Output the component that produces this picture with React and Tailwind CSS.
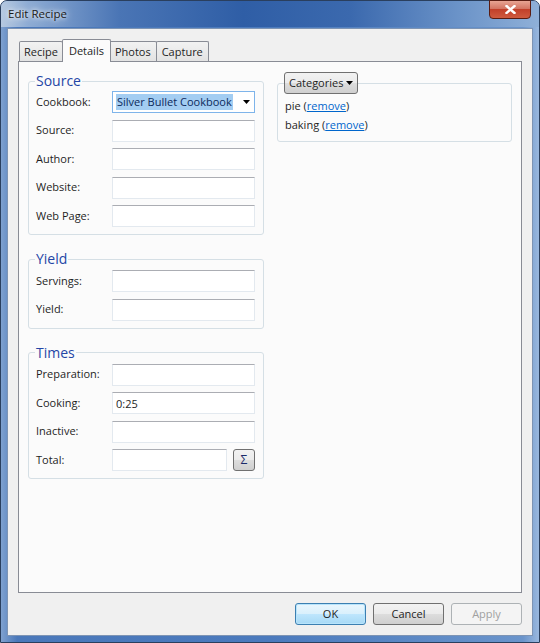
import React, { useState } from 'react';

const FONT = { fontFamily: '"Open Sans", "Noto Sans", "Liberation Sans", sans-serif' };

// one labelled row in a group box
const Field = ({ label, value, children }) => (
  <div className="flex items-center h-[22px]">
    <span className="w-[76px] shrink-0 text-[#1e1e1e]">{label}</span>
    {children || (
      <input
        defaultValue={value}
        className="w-[143px] h-[22px] px-[3px] bg-white border border-[#e3e9ef] border-t-[#abadb3] outline-none text-[#1e1e1e]"
      />
    )}
  </div>
);

const Group = ({ title, className, children }) => (
  <fieldset className={'border border-[#d5dfe5] rounded-[3px] px-[7px] pb-[7px] ' + (className || '')}>
    <legend className="ml-[-1px] px-[1px] text-[14px] leading-[18px] text-[#2446a6]">{title}</legend>
    {children}
  </fieldset>
);

const Tab = ({ label, active, onClick }) =>
  active ? (
    <div className="relative z-10 -mb-px h-[23px] px-[6px] pt-[3px] border border-b-0 border-[#898c95] bg-[#fbfbfb] -ml-px -mr-px rounded-t-[2px]">
      {label}
    </div>
  ) : (
    <button
      onClick={onClick}
      className="mt-[3px] h-[20px] px-[5px] border border-b-0 border-[#898c95] bg-[linear-gradient(#f2f2f2,#e3e3e3)] rounded-t-[2px] leading-[18px] first:ml-0 first:px-[4px] -ml-px"
    >
      {label}
    </button>
  );

const GRAD = 'bg-[linear-gradient(#f2f2f2_0%,#ebebeb_50%,#dddddd_51%,#cfcfcf_100%)]';

const Btn = ({ label, variant }) => {
  const styles = {
    ok: 'border-[#3c7fb1] bg-[linear-gradient(#eaf6fd_0%,#d9f0fc_50%,#bee6fd_51%,#a7d9f5_100%)] text-[#1e1e1e] shadow-[inset_0_0_0_1px_#b8e4fb]',
    normal: 'border-[#707070] ' + GRAD + ' text-[#1e1e1e]',
    disabled: 'border-[#adb2b5] bg-[#f4f4f4] text-[#a0a0a0]',
  };
  return (
    <button className={'w-[71px] h-[22px] border rounded-[3px] ' + styles[variant]}>{label}</button>
  );
};

export default function App() {
  const [tab, setTab] = useState('Details');
  const [cats, setCats] = useState(['pie', 'baking']);

  return (
    <div className="w-[540px] h-[643px] overflow-hidden text-[11px] text-[#1e1e1e]" style={FONT}>
      <div className="relative w-full h-full flex flex-col rounded-t-[7px] border border-[#2a3f5e] bg-[linear-gradient(90deg,#7fa1cf_0%,#4a78ba_3%,#4b7abd_50%,#6a94cb_97%,#9ab8de_100%)]">
        {/* title bar */}
        <div className="h-[26px] shrink-0 flex items-center pl-[7px] rounded-t-[6px] bg-[linear-gradient(90deg,#b6c9e0_0%,#8eacd4_5%,#4a75b5_22%,#2f5ea6_45%,#3b69ae_65%,#6b93c8_85%,#8fb0d8_100%)]">
          <span className="text-[11.5px] text-[#1a1a1a] [text-shadow:0_0_8px_#ffffff,0_0_4px_#ffffff]">Edit Recipe</span>
        </div>
        <div className="absolute top-[-1px] right-[8px] w-[42px] h-[19px] rounded-b-[4px] border border-[#5a1c12] bg-[linear-gradient(#e8a493_0%,#d37563_45%,#c2402a_50%,#cf5b3f_100%)] flex items-center justify-center">
          <svg width="11" height="9" viewBox="0 0 11 9">
            <path d="M1.5 1 L9.5 8 M9.5 1 L1.5 8" stroke="#fff" strokeWidth="2.4" strokeLinecap="square" />
          </svg>
        </div>

        {/* client area */}
        <div className="flex-1 mx-[6px] mb-[6px] mt-[1px] border border-[#7d94b4] bg-[#f0f0f0] flex flex-col px-[10px] pt-[10px]">
          <div className="flex items-end h-[22px] pl-px">
            {['Recipe', 'Details', 'Photos', 'Capture'].map((t) => (
              <Tab key={t} label={t} active={tab === t} onClick={() => setTab(t)} />
            ))}
          </div>

          <div className="h-[532px] border border-[#898c95] bg-[#fbfbfb] px-[9px] pt-[10px] flex gap-[13px]">
            {/* left column */}
            <div className="w-[236px] flex flex-col gap-[15px]">
              <Group title="Source">
                <div className="flex flex-col gap-[6.5px] pt-[1px]">
                  <Field label="Cookbook:">
                    <div className="w-[143px] h-[22px] border border-[#7eb4ea] bg-white flex items-center pl-[3px] pr-[4px]">
                      <span className="flex-1 truncate">
                        <span className="bg-[#a3cdf2] text-[#0c2a5c] px-[1px] py-[1px]">Silver Bullet Cookbook</span>
                      </span>
                      <svg width="7" height="4" viewBox="0 0 7 4"><path d="M0 0 H7 L3.5 4 Z" fill="#000" /></svg>
                    </div>
                  </Field>
                  <Field label="Source:" />
                  <Field label="Author:" />
                  <Field label="Website:" />
                  <Field label="Web Page:" />
                </div>
              </Group>

              <Group title="Yield">
                <div className="flex flex-col gap-[6.5px] pt-[2px]">
                  <Field label="Servings:" />
                  <Field label="Yield:" />
                </div>
              </Group>

              <Group title="Times">
                <div className="flex flex-col gap-[6.5px] pt-[2px]">
                  <Field label="Preparation:" />
                  <Field label="Cooking:" value="0:25" />
                  <Field label="Inactive:" />
                  <Field label="Total:">
                    <input className="w-[115px] h-[22px] px-[3px] bg-white border border-[#e3e9ef] border-t-[#abadb3] outline-none" />
                    <button className={'ml-[6px] w-[22px] h-[22px] border border-[#707070] rounded-[3px] text-[12px] leading-none text-[#1a2a6a] ' + GRAD}>
                      Σ
                    </button>
                  </Field>
                </div>
              </Group>
            </div>

            {/* right column */}
            <div className="flex-1">
              <fieldset className="border border-[#d5dfe5] rounded-[3px] px-[7px] pb-[8px]">
                <legend className="ml-[-1px] px-0">
                  <button className={'h-[22px] px-[4px] flex items-center gap-[3px] border border-[#707070] rounded-[3px] ' + GRAD}>
                    Categories
                    <svg width="7" height="4" viewBox="0 0 7 4"><path d="M0 0 H7 L3.5 4 Z" fill="#000" /></svg>
                  </button>
                </legend>
                <div className="flex flex-col gap-[3px] pt-[4px]">
                  {cats.map((c) => (
                    <div key={c} className="leading-[16px]">
                      {c} (
                      <a
                        href="#"
                        onClick={(e) => {
                          e.preventDefault();
                          setCats(cats.filter((x) => x !== c));
                        }}
                        className="text-[#0066cc] underline"
                      >
                        remove
                      </a>
                      )
                    </div>
                  ))}
                </div>
              </fieldset>
            </div>
          </div>

          {/* dialog buttons */}
          <div className="flex justify-end gap-[7px] pt-[10px]">
            <Btn label="OK" variant="ok" />
            <Btn label="Cancel" variant="normal" />
            <Btn label="Apply" variant="disabled" />
          </div>
        </div>
      </div>
    </div>
  );
}
